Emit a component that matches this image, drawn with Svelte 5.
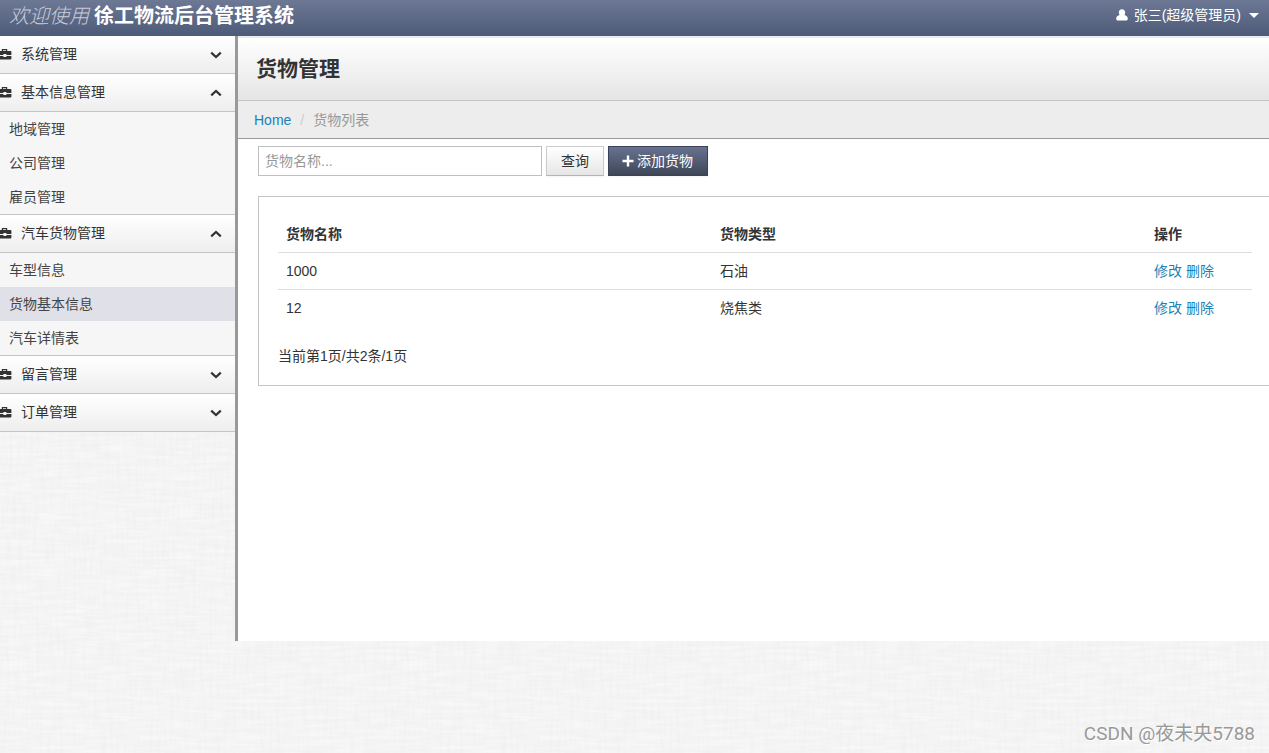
<script lang="ts">
  type Group = { label: string; open: boolean; items: string[] };

  let groups = $state<Group[]>([
    { label: "系统管理", open: false, items: [] },
    { label: "基本信息管理", open: true, items: ["地域管理", "公司管理", "雇员管理"] },
    { label: "汽车货物管理", open: true, items: ["车型信息", "货物基本信息", "汽车详情表"] },
    { label: "留言管理", open: false, items: [] },
    { label: "订单管理", open: false, items: [] },
  ]);

  const goods = [
    { name: "1000", type: "石油" },
    { name: "12", type: "烧焦类" },
  ];

  let active = $state("货物基本信息");
  let query = $state("");
</script>

<div class="page">
  <header class="topbar">
    <div class="brand"><em>欢迎使用</em> <strong>徐工物流后台管理系统</strong></div>
    <button class="user" type="button">
      <svg width="12" height="12" viewBox="0 0 12 12" aria-hidden="true">
        <path
          d="M6 0.2C4 0.2 2.8 1.5 2.8 3.4C2.8 4.6 3.2 5.4 3.7 6.1C1.6 6.3 0.2 7.8 0.2 9.8C0.2 10.9 0.8 11.6 1.8 11.6H10.2C11.2 11.6 11.8 10.9 11.8 9.8C11.8 7.8 10.4 6.3 8.3 6.1C8.8 5.4 9.2 4.6 9.2 3.4C9.2 1.5 8 0.2 6 0.2Z"
          fill="currentColor"
        />
      </svg>
      <span>张三(超级管理员)</span>
      <i class="caret"></i>
    </button>
  </header>

  <div class="body">
    <nav class="sidebar">
      {#each groups as group (group.label)}
        <button
          class="group"
          type="button"
          aria-expanded={group.open}
          onclick={() => (group.open = !group.open)}
        >
          <svg class="case" width="14" height="14" viewBox="0 0 14 14" aria-hidden="true">
            <path d="M4.4 4V2.6H8.6V4" fill="none" stroke="currentColor" stroke-width="1.2" />
            <path
              d="M1.2 4H12.4Q13.4 4 13.4 5V8H8.4V7H5.4V8H0V5Q0 4 1.2 4ZM0 9H5.4V10H8.4V9H13.4V11.6Q13.4 12.6 12.4 12.6H1.2Q0 12.6 0 11.6Z"
              fill="currentColor"
            />
          </svg>
          <span>{group.label}</span>
          <svg class="chevron" width="12" height="8" viewBox="0 0 12 8" aria-hidden="true">
            <path
              d={group.open ? "M1.2 6.4L6 2L10.8 6.4" : "M1.2 1.6L6 6L10.8 1.6"}
              fill="none"
              stroke="currentColor"
              stroke-width="2.2"
            />
          </svg>
        </button>
        {#if group.open && group.items.length}
          <ul>
            {#each group.items as item (item)}
              <li>
                <a href="#top" class:active={active === item} onclick={() => (active = item)}>{item}</a>
              </li>
            {/each}
          </ul>
        {/if}
      {/each}
    </nav>

    <main>
      <h1>货物管理</h1>
      <div class="breadcrumb">
        <a href="#top">Home</a>
        <span class="divider">/</span>
        <span>货物列表</span>
      </div>

      <form class="search" onsubmit={(e) => e.preventDefault()}>
        <input type="text" aria-label="货物名称" placeholder="货物名称..." bind:value={query} />
        <button class="btn" type="submit">查询</button>
        <button class="btn primary" type="button">
          <svg width="12" height="12" viewBox="0 0 12 12" aria-hidden="true">
            <path d="M6 0.5V11.5M0.5 6H11.5" stroke="currentColor" stroke-width="2.4" />
          </svg>
          添加货物
        </button>
      </form>

      <section class="panel">
        <table>
          <thead>
            <tr>
              <th>货物名称</th>
              <th>货物类型</th>
              <th class="ops">操作</th>
            </tr>
          </thead>
          <tbody>
            {#each goods as row (row.name)}
              <tr>
                <td>{row.name}</td>
                <td>{row.type}</td>
                <td><a href="#top">修改</a> <a href="#top">删除</a></td>
              </tr>
            {/each}
          </tbody>
        </table>
        <p class="pager">当前第1页/共2条/1页</p>
      </section>
    </main>
  </div>

  <footer>CSDN @夜未央5788</footer>
</div>

<style>
  :global(body) {
    margin: 0;
  }
  .page {
    display: flex;
    flex-direction: column;
    min-height: 100vh;
    overflow: hidden;
    color: #333;
    font: 14px/20px "Liberation Sans", "Noto Sans CJK SC", sans-serif;
    /* woven linen: one noise stretched along each axis */
    background: #f3f3f3
      url("data:image/svg+xml,%3Csvg xmlns='http://www.w3.org/2000/svg' width='400' height='400'%3E%3Cfilter id='a' x='0' y='0' width='1' height='1'%3E%3CfeTurbulence type='fractalNoise' baseFrequency='.03 .3' numOctaves='2' stitchTiles='stitch'/%3E%3CfeColorMatrix values='0 0 0 0 1 0 0 0 0 1 0 0 0 0 1 1 0 0 0 -.35'/%3E%3C/filter%3E%3Cfilter id='b' x='0' y='0' width='1' height='1'%3E%3CfeTurbulence type='fractalNoise' baseFrequency='.3 .03' numOctaves='2' seed='4' stitchTiles='stitch'/%3E%3CfeColorMatrix values='0 0 0 0 .8 0 0 0 0 .8 0 0 0 0 .8 .6 0 0 0 -.25'/%3E%3C/filter%3E%3Crect width='400' height='400' filter='url(%23a)'/%3E%3Crect width='400' height='400' filter='url(%23b)'/%3E%3C/svg%3E");
  }
  button,
  input {
    font: inherit;
    color: inherit;
    box-sizing: border-box;
  }
  a {
    color: #1a82b8;
    text-decoration: none;
  }
  .topbar {
    display: flex;
    justify-content: space-between;
    height: 36px;
    padding: 0 10px 0 9px;
    color: #fff;
    background: linear-gradient(#6c7894, #4e5b78);
  }
  .brand {
    font-family: "Liberation Serif", "Noto Sans CJK SC", serif;
    font-size: 20px;
    line-height: 32px;
    white-space: nowrap;
  }
  .brand em {
    color: #c8cdd8;
    font-weight: 300;
  }
  .user {
    display: flex;
    align-items: center;
    gap: 6px;
    height: 30px;
    padding: 0;
    border: 0;
    background: none;
    cursor: pointer;
  }
  .caret {
    margin: 1px 0 0 2px;
    border: 5px solid transparent;
    border-top-color: currentColor;
    border-bottom: 0;
  }
  .body {
    display: flex;
    flex: 1;
  }
  .sidebar {
    flex: none;
    width: 235px;
    border-right: 3px solid #999;
  }
  .group {
    display: flex;
    align-items: center;
    width: 100%;
    height: 38px;
    padding: 0 13px 2px 0;
    border: 0;
    border-bottom: 1px solid #c4c4c4;
    background: linear-gradient(#fff, #eee);
    text-align: left;
    cursor: pointer;
  }
  .case {
    margin: 0 9px 0 -2px;
  }
  .chevron {
    margin: 2px 0 0 auto;
  }
  .sidebar ul {
    margin: 0;
    padding: 0;
    list-style: none;
    background: #f6f6f6;
    border-bottom: 1px solid #c4c4c4;
  }
  .sidebar li a {
    display: block;
    padding: 7px 9px;
    color: #444;
  }
  .sidebar li a.active {
    background: #e0e0e9;
  }
  main {
    flex: 1;
    min-width: 0;
    background: #fff;
  }
  h1 {
    margin: 0;
    padding: 18px;
    border-top: 2px solid #e9ecf2;
    border-bottom: 1px solid #c4c4c4;
    background: linear-gradient(#fff, #e5e5e5);
    font-size: 21px;
    line-height: 26px;
  }
  .breadcrumb {
    display: flex;
    padding: 9px 16px 8px;
    border-bottom: 1px solid #999;
    background: #ededed;
    color: #999;
  }
  .divider {
    padding: 0 9px;
    color: #ccc;
  }
  .search {
    display: flex;
    gap: 4px;
    padding: 7px 20px 20px;
  }
  .search input {
    width: 284px;
    height: 30px;
    padding: 0 6px;
    border: 1px solid #c0c0c0;
    background: #fff;
  }
  .search input::placeholder {
    color: #999;
  }
  .btn {
    display: flex;
    align-items: center;
    gap: 3px;
    height: 30px;
    padding: 0 14px;
    border: 1px solid #ccc;
    border-bottom-color: #b3b3b3;
    background: linear-gradient(#fff, #e6e6e6);
    box-shadow: 0 1px 2px rgba(0, 0, 0, 0.05);
    cursor: pointer;
  }
  .btn.primary {
    padding: 0 14px 0 13px;
    color: #fff;
    border-color: #394258;
    background: linear-gradient(#67728f, #3f4757);
  }
  .panel {
    margin: 0 -3px 0 20px;
    padding: 19px;
    border: 1px solid #c4c4c4;
  }
  table {
    width: 100%;
    table-layout: fixed;
    border-collapse: collapse;
  }
  th,
  td {
    padding: 8px;
    text-align: left;
  }
  td {
    border-top: 1px solid #ddd;
  }
  .ops {
    width: 90px;
  }
  .pager {
    margin: 20px 0 0;
  }
  footer {
    box-sizing: border-box;
    height: 112px;
    padding: 80px 14px 0;
    color: #999;
    font-family: Roboto, "Noto Sans CJK SC", sans-serif;
    font-size: 19px;
    line-height: 26px;
    text-align: right;
    text-shadow: 1px 1px 0 #fff;
  }
</style>
